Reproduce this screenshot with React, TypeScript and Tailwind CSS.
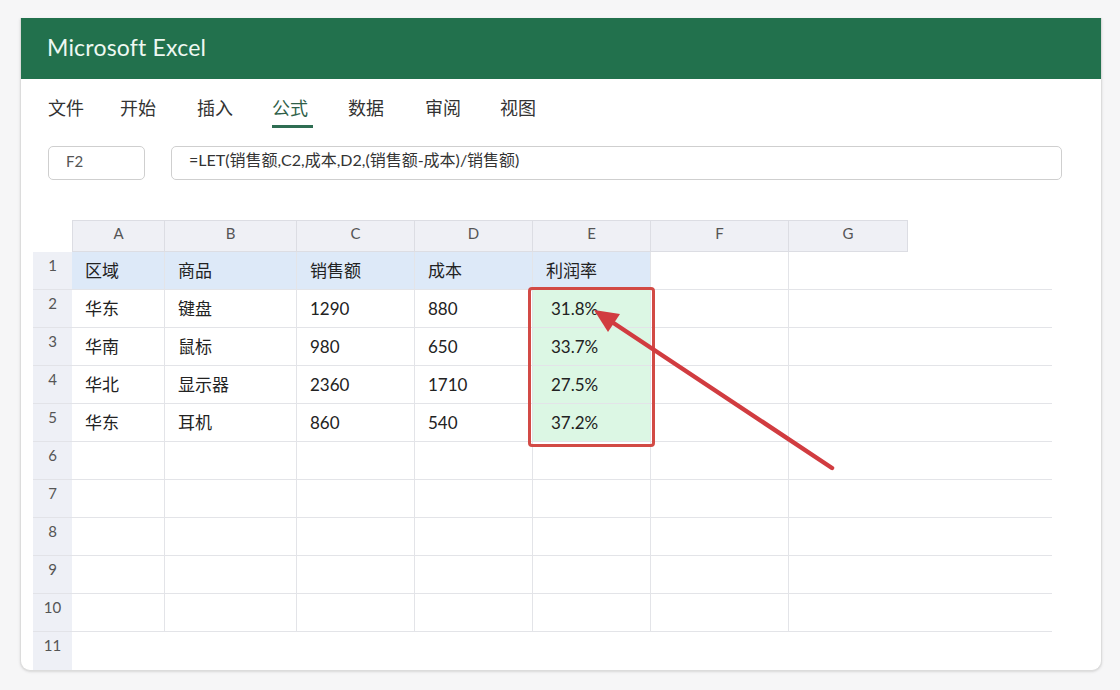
import React from 'react';

const COLS = [
  { key: 'A', w: 'w-[92px]' },
  { key: 'B', w: 'w-[132px]' },
  { key: 'C', w: 'w-[118px]' },
  { key: 'D', w: 'w-[118px]' },
  { key: 'E', w: 'w-[118px]' },
  { key: 'F', w: 'w-[138px]' },
  { key: 'G', w: 'w-[119px]' },
];

// tab label + the slot width up to the next tab
const TABS = [
  { label: '文件', w: 'w-[72px]' },
  { label: '开始', w: 'w-[77px]' },
  { label: '插入', w: 'w-[75px]' },
  { label: '公式', w: 'w-[76px]' },
  { label: '数据', w: 'w-[77px]' },
  { label: '审阅', w: 'w-[75px]' },
  { label: '视图', w: 'w-[75px]' },
];

const ROWS: string[][] = [
  ['区域', '商品', '销售额', '成本', '利润率'],
  ['华东', '键盘', '1290', '880', '31.8%'],
  ['华南', '鼠标', '980', '650', '33.7%'],
  ['华北', '显示器', '2360', '1710', '27.5%'],
  ['华东', '耳机', '860', '540', '37.2%'],
];

function RowNum({ n, last }: { n: number; last?: boolean }) {
  return (
    <div
      className={`w-[39px] shrink-0 bg-[#eef0f6] pt-[3px] text-center text-[15px] leading-[20px] text-[#555] ${
        last ? '' : 'border-b border-[#e2e3e8]'
      }`}
    >
      {n}
    </div>
  );
}

function Row({ idx }: { idx: number }) {
  const data = ROWS[idx] ?? [];
  const header = idx === 0;
  return (
    <div className="flex h-[38px]">
      <RowNum n={idx + 1} />
      {COLS.map((c, ci) => {
        const text = data[ci];
        let bg = '';
        if (header && ci < 5) bg = 'bg-[#dde9f8]';
        if (!header && ci === 4 && idx < 5) bg = 'bg-[#dcf7e4]';
        const pct = !header && ci === 4;
        return (
          <div
            key={c.key}
            className={`${c.w} shrink-0 flex items-center border-b border-[#e3e4e8] ${
              ci > 0 ? 'border-l' : ''
            } ${bg} ${pct ? 'pl-[18px]' : 'pl-[13px]'} text-[17px] text-[#222]`}
          >
            {text}
          </div>
        );
      })}
      <div className="w-[145px] shrink-0 border-b border-[#e3e4e8]" />
    </div>
  );
}

export default function App() {
  return (
    <div className="w-[1120px] h-[690px] bg-[#f6f6f7] pt-[18px] pl-[20px] font-['Lato','Noto_Sans_CJK_SC',sans-serif]">
      <div className="w-[1082px] h-[653px] bg-white border-x border-b border-[#dcdcdc] rounded-b-[10px] overflow-hidden shadow-sm">
        {/* title bar */}
        <div className="h-[61px] bg-[#22714d] flex items-center pl-[27px] pb-[2px] -mx-px">
          <span className="text-[23px] text-[#eef8f2] tracking-[0.2px]">Microsoft Excel</span>
        </div>

        {/* ribbon tabs */}
        <div className="flex pl-[27px] pt-[19px]">
          {TABS.map((t) => {
            const active = t.label === '公式';
            return (
              <div key={t.label} className={`${t.w} shrink-0 flex flex-col items-start`}>
                <span
                  className={`text-[18px] leading-[20px] ${active ? 'text-[#2f5f49]' : 'text-[#333]'}`}
                >
                  {t.label}
                </span>
                <div className={`mt-[7px] h-[3px] w-[41px] ${active ? 'bg-[#2e6d52]' : ''}`} />
              </div>
            );
          })}
        </div>

        {/* formula bar */}
        <div className="flex mt-[18px] pl-[27px] gap-[26px]">
          <div className="w-[97px] h-[34px] border border-[#cfcfcf] rounded-[5px] pl-[17px] pt-[4px] text-[15px] leading-[20px] text-[#555]">
            F2
          </div>
          <div className="w-[891px] h-[34px] border border-[#cfcfcf] rounded-[5px] pl-[17px] pt-[3px] text-[16px] leading-[20px] text-[#333]">
            =LET(销售额,C2,成本,D2,(销售额-成本)/销售额)
          </div>
        </div>

        {/* grid */}
        <div className="relative mt-[40px] ml-[12px]">
          <div className="flex h-[32px]">
            <div className="w-[39px] shrink-0" />
            <div className="flex border-y border-r border-[#dcdde3] bg-[#eff0f5]">
              {COLS.map((c) => (
                <div
                  key={c.key}
                  className={`${c.w} shrink-0 border-l border-[#dcdde3] text-center pt-[2px] text-[15px] leading-[20px] text-[#555]`}
                >
                  {c.key}
                </div>
              ))}
            </div>
          </div>

          {Array.from({ length: 10 }).map((_, i) => (
            <Row key={i} idx={i} />
          ))}

          <div className="flex h-[38px]">
            <RowNum n={11} last />
            <div className="flex-1" />
          </div>

          {/* highlight box around E2:E5 */}
          <div className="absolute left-[495px] top-[67px] w-[127px] h-[160px] border-[3px] border-[#d24a45] rounded-[4px]" />

          {/* arrow */}
          <svg className="absolute left-0 top-0 pointer-events-none" width="1060" height="460">
            <line x1="799" y1="248" x2="579" y2="102" stroke="#d13c40" strokeWidth="4.5" strokeLinecap="round" />
            <polygon points="561,90 587,94 575,112" fill="#d13c40" />
          </svg>
        </div>
      </div>
    </div>
  );
}
